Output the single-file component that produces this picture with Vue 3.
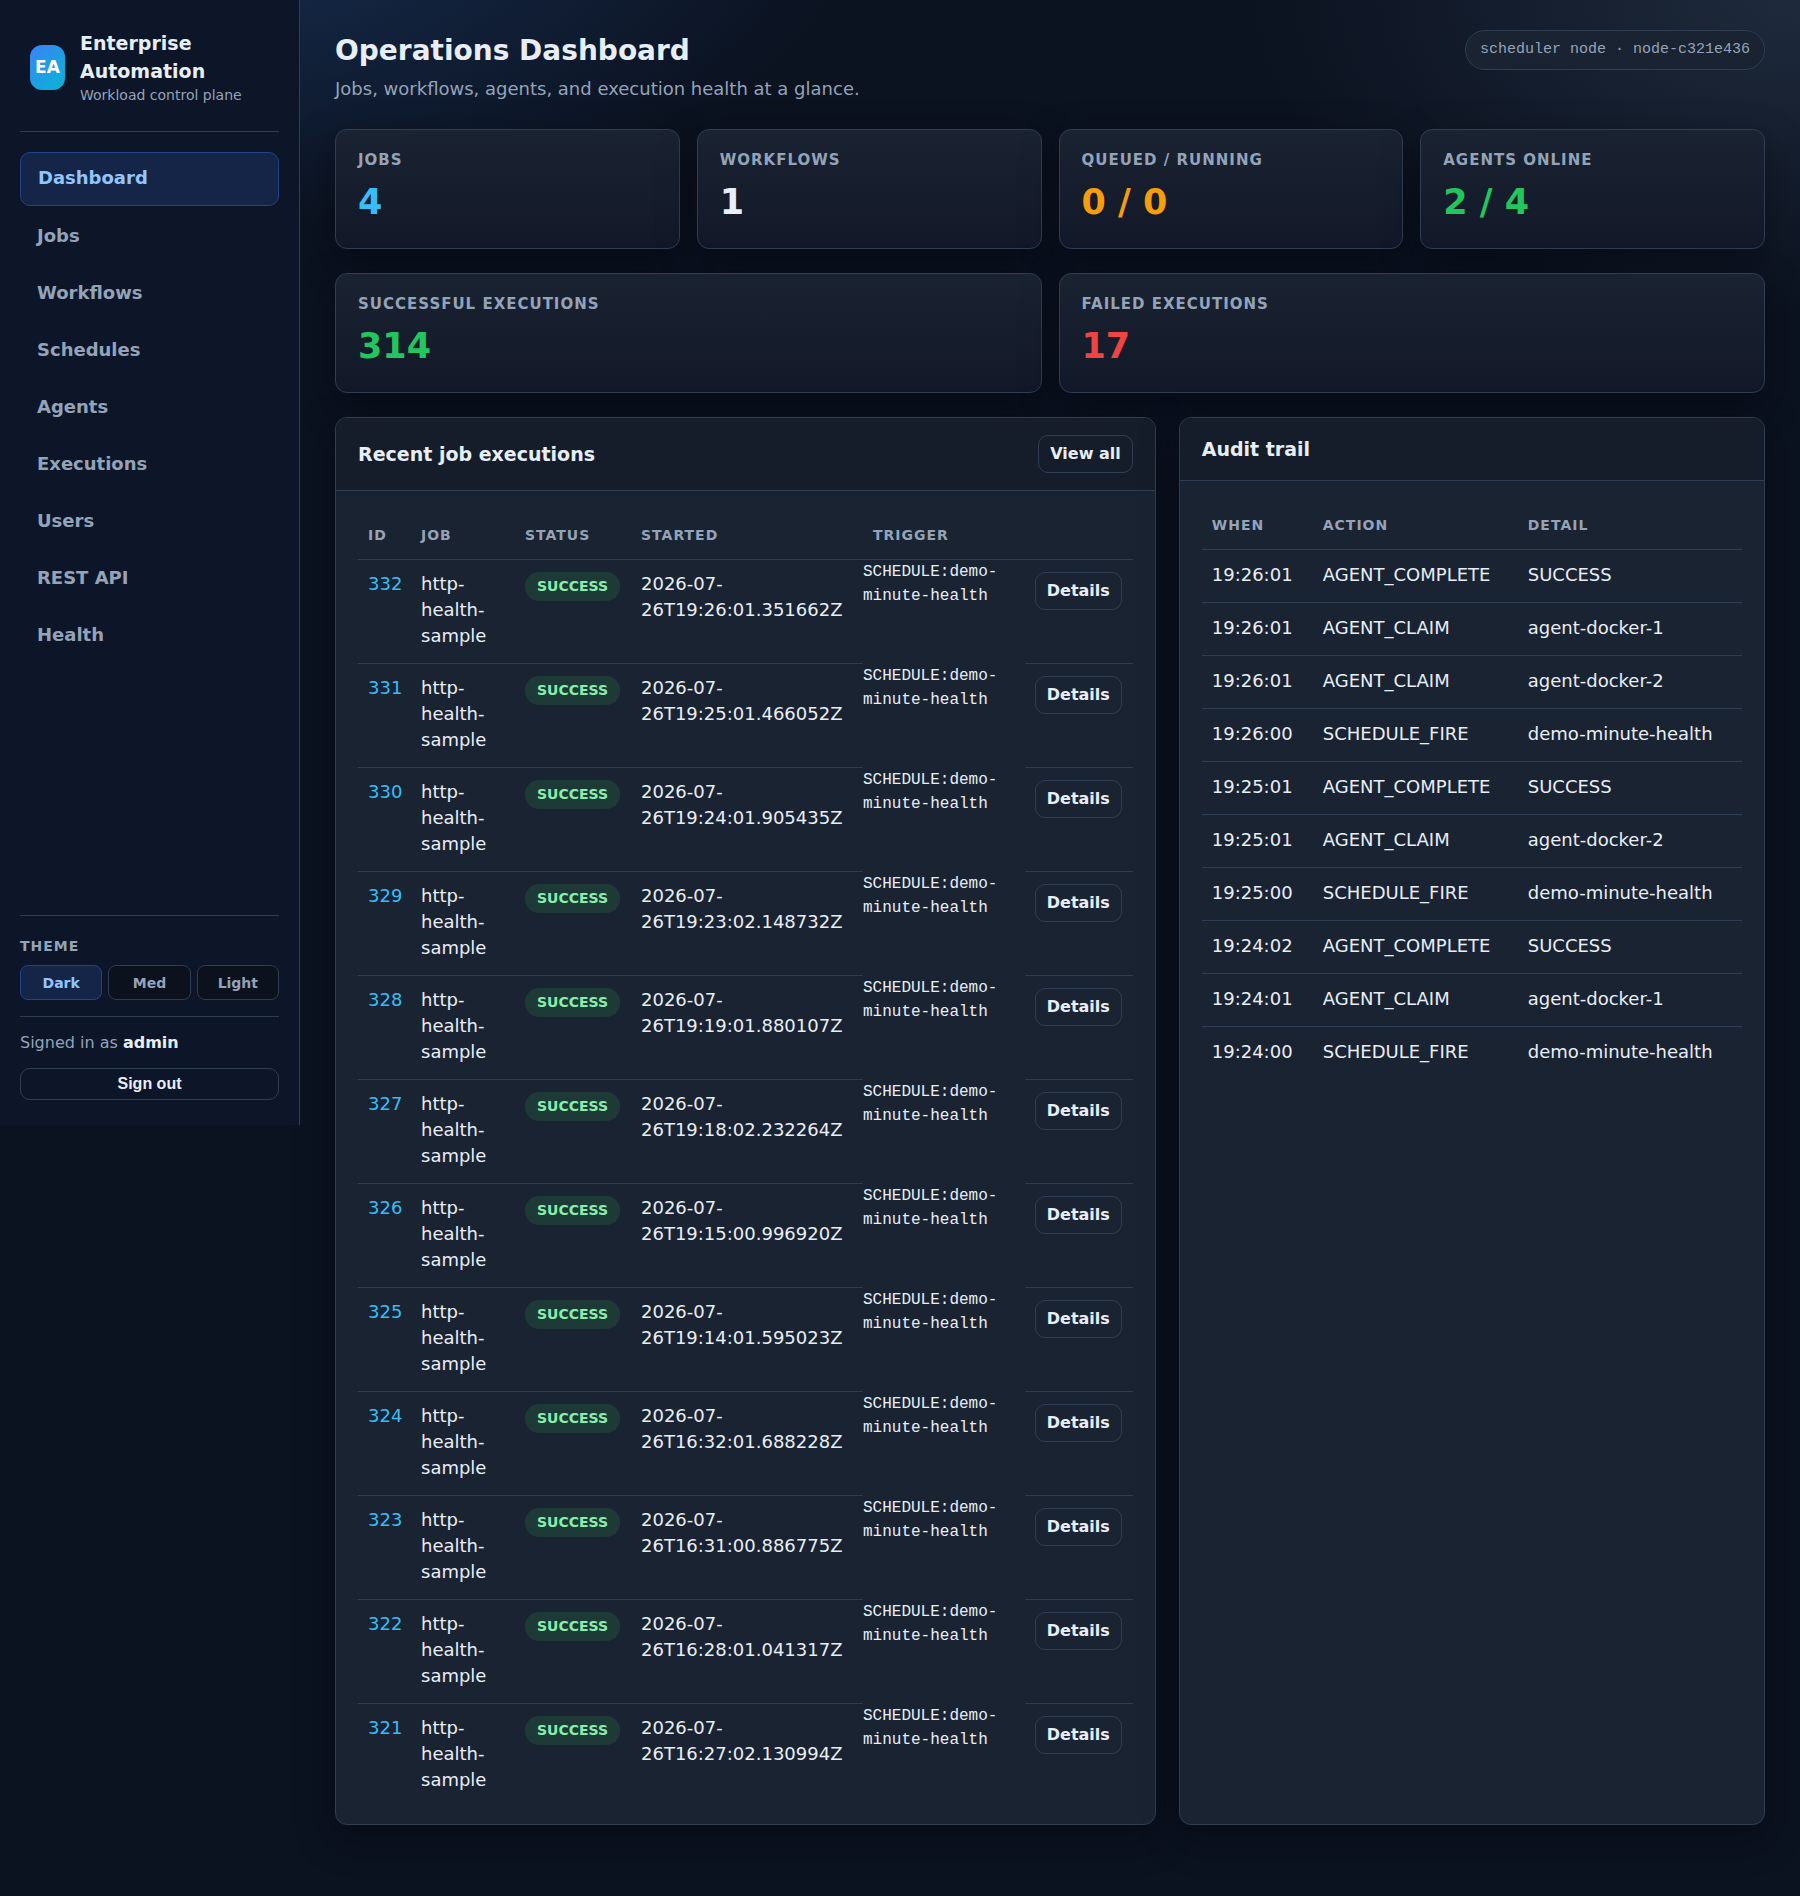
<script setup>
import { ref } from 'vue'

const navItems = ['Dashboard', 'Jobs', 'Workflows', 'Schedules', 'Agents', 'Executions', 'Users', 'REST API', 'Health']
const activeNav = ref('Dashboard')

const themes = ['Dark', 'Med', 'Light']
const theme = ref('Dark')

const topStats = [
  { label: 'Jobs', value: '4', tone: 'info' },
  { label: 'Workflows', value: '1', tone: 'plain' },
  { label: 'Queued / Running', value: '0 / 0', tone: 'warn' },
  { label: 'Agents online', value: '2 / 4', tone: 'good' },
]
const totals = [
  { label: 'Successful executions', value: '314', tone: 'good' },
  { label: 'Failed executions', value: '17', tone: 'bad' },
]

const executions = [
  [332, '2026-07-26T19:26:01.351662Z'],
  [331, '2026-07-26T19:25:01.466052Z'],
  [330, '2026-07-26T19:24:01.905435Z'],
  [329, '2026-07-26T19:23:02.148732Z'],
  [328, '2026-07-26T19:19:01.880107Z'],
  [327, '2026-07-26T19:18:02.232264Z'],
  [326, '2026-07-26T19:15:00.996920Z'],
  [325, '2026-07-26T19:14:01.595023Z'],
  [324, '2026-07-26T16:32:01.688228Z'],
  [323, '2026-07-26T16:31:00.886775Z'],
  [322, '2026-07-26T16:28:01.041317Z'],
  [321, '2026-07-26T16:27:02.130994Z'],
].map(([id, started]) => ({
  id,
  started,
  job: 'http-health-sample',
  status: 'SUCCESS',
  trigger: 'SCHEDULE:demo-minute-health',
}))

const audit = [
  ['19:26:01', 'AGENT_COMPLETE', 'SUCCESS'],
  ['19:26:01', 'AGENT_CLAIM', 'agent-docker-1'],
  ['19:26:01', 'AGENT_CLAIM', 'agent-docker-2'],
  ['19:26:00', 'SCHEDULE_FIRE', 'demo-minute-health'],
  ['19:25:01', 'AGENT_COMPLETE', 'SUCCESS'],
  ['19:25:01', 'AGENT_CLAIM', 'agent-docker-2'],
  ['19:25:00', 'SCHEDULE_FIRE', 'demo-minute-health'],
  ['19:24:02', 'AGENT_COMPLETE', 'SUCCESS'],
  ['19:24:01', 'AGENT_CLAIM', 'agent-docker-1'],
  ['19:24:00', 'SCHEDULE_FIRE', 'demo-minute-health'],
]
</script>

<template>
  <div class="app">
    <aside class="sidebar">
      <div class="brand">
        <div class="logo">EA</div>
        <div class="brand-text">
          <strong class="brand-name">Enterprise Automation</strong>
          <span class="brand-sub">Workload control plane</span>
        </div>
      </div>

      <nav class="nav">
        <a
          v-for="item in navItems"
          :key="item"
          href="#"
          class="nav-link"
          :class="{ active: item === activeNav }"
          @click.prevent="activeNav = item"
        >{{ item }}</a>
      </nav>

      <section class="theme">
        <h2 class="theme-title">Theme</h2>
        <div class="theme-options">
          <button
            v-for="t in themes"
            :key="t"
            type="button"
            class="theme-btn"
            :class="{ active: t === theme }"
            @click="theme = t"
          >{{ t }}</button>
        </div>
      </section>

      <section class="account">
        <p class="signed-in">Signed in as <strong>admin</strong></p>
        <button type="button" class="sign-out">Sign out</button>
      </section>
    </aside>

    <main class="main">
      <header class="page-head">
        <div>
          <h1 class="page-title">Operations Dashboard</h1>
          <p class="page-sub">Jobs, workflows, agents, and execution health at a glance.</p>
        </div>
        <span class="node">scheduler node · node-c321e436</span>
      </header>

      <div class="stats stats-four">
        <article v-for="s in topStats" :key="s.label" class="stat">
          <h2 class="stat-label">{{ s.label }}</h2>
          <p class="stat-value" :class="s.tone">{{ s.value }}</p>
        </article>
      </div>
      <div class="stats stats-two">
        <article v-for="s in totals" :key="s.label" class="stat">
          <h2 class="stat-label">{{ s.label }}</h2>
          <p class="stat-value" :class="s.tone">{{ s.value }}</p>
        </article>
      </div>

      <div class="panels">
        <section class="panel">
          <div class="panel-head">
            <h2 class="panel-title">Recent job executions</h2>
            <a href="#" class="btn">View all</a>
          </div>
          <div class="panel-body">
            <table class="table executions">
              <colgroup>
                <col class="c-id" /><col class="c-job" /><col class="c-status" />
                <col class="c-started" /><col /><col class="c-actions" />
              </colgroup>
              <thead>
                <tr>
                  <th>ID</th>
                  <th>Job</th>
                  <th>Status</th>
                  <th>Started</th>
                  <th>Trigger</th>
                  <th></th>
                </tr>
              </thead>
              <tbody>
                <tr v-for="e in executions" :key="e.id">
                  <td><a href="#" class="id-link">{{ e.id }}</a></td>
                  <td>{{ e.job }}</td>
                  <td><span class="badge">{{ e.status }}</span></td>
                  <td>{{ e.started }}</td>
                  <td class="trigger">{{ e.trigger }}</td>
                  <td><a href="#" class="btn">Details</a></td>
                </tr>
              </tbody>
            </table>
          </div>
        </section>

        <section class="panel">
          <div class="panel-head">
            <h2 class="panel-title">Audit trail</h2>
          </div>
          <div class="panel-body">
            <table class="table audit">
              <colgroup><col class="c-when" /><col class="c-action" /><col /></colgroup>
              <thead>
                <tr>
                  <th>When</th>
                  <th>Action</th>
                  <th>Detail</th>
                </tr>
              </thead>
              <tbody>
                <tr v-for="(row, i) in audit" :key="i">
                  <td v-for="cell in row" :key="cell">{{ cell }}</td>
                </tr>
              </tbody>
            </table>
          </div>
        </section>
      </div>
    </main>
  </div>
</template>

<style>
body {
  margin: 0;
  background:
    radial-gradient(1250px 600px at 10% -5%, rgba(59, 130, 226, 0.26), transparent 55%),
    radial-gradient(1100px 625px at 100% 0%, rgba(108, 138, 172, 0.2), transparent 50%),
    #0b1220;
  background-repeat: no-repeat;
}
</style>

<style scoped>
.app {
  --line: #2f3e52;
  --text: #e8eef7;
  --muted: #94a3b8;
  --mono: "Liberation Mono", monospace;
  display: flex;
  align-items: flex-start;
  color: var(--text);
  font-family: "DejaVu Sans", sans-serif;
  font-size: 18px;
  line-height: 26px;
}

h1,
h2,
p {
  margin: 0;
}

a {
  text-decoration: none;
}

/* Sidebar */
.sidebar {
  position: sticky;
  top: 0;
  box-sizing: border-box;
  flex: 0 0 300px;
  padding: 20px 20px 25px;
  border-right: 1px solid var(--line);
  background: #0d1628;
}

.brand {
  display: flex;
  align-items: center;
  gap: 15px;
  padding: 9px 10px 26px;
  border-bottom: 1px solid var(--line);
}

.logo {
  display: grid;
  place-items: center;
  flex: 0 0 35px;
  height: 45px;
  border-radius: 12px;
  background: linear-gradient(135deg, #3b82f6, #06b6d4);
  color: #fff;
  font-size: 17px;
  font-weight: 700;
}

.brand-text {
  display: flex;
  flex-direction: column;
}

.brand-name {
  font-size: 19px;
  line-height: 28px;
}

.brand-sub {
  color: var(--muted);
  font-size: 14px;
  line-height: 20px;
}

.nav {
  display: flex;
  flex-direction: column;
  gap: 5px;
  padding: 20px 0 253px;
}

.nav-link {
  padding: 12px 17px 14px;
  border-radius: 10px;
  color: var(--muted);
  font-weight: 700;
}

.nav-link.active {
  border: 1px solid #22438a;
  background: #152547;
  color: #93c5fd;
}

.theme {
  padding: 20px 0 16px;
  border-top: 1px solid var(--line);
}

.theme-title {
  margin-bottom: 8px;
  color: var(--muted);
  font-size: 14px;
  line-height: 21px;
  letter-spacing: 1px;
  text-transform: uppercase;
}

.theme-options {
  display: grid;
  grid-template-columns: repeat(3, 1fr);
  gap: 6px;
}

.theme-btn {
  height: 35px;
  padding: 0;
  border: 1px solid var(--line);
  border-radius: 8px;
  background: #0b111d;
  color: var(--muted);
  font: 700 14px "DejaVu Sans", sans-serif;
}

.theme-btn.active {
  border-color: #22438a;
  background: #152547;
  color: #93c5fd;
}

.account {
  padding-top: 13px;
  border-top: 1px solid var(--line);
}

.signed-in {
  margin-bottom: 12px;
  color: var(--muted);
  font-size: 16px;
}

.signed-in strong {
  color: var(--text);
}

.sign-out {
  width: 100%;
  height: 32px;
  padding: 0;
  border: 1px solid var(--line);
  border-radius: 10px;
  background: transparent;
  color: var(--text);
  font: 700 16px "Liberation Sans", sans-serif;
}

/* Main column */
.main {
  display: flex;
  flex-direction: column;
  flex: 1;
  gap: 24px;
  min-width: 0;
  padding: 30px 35px 70px;
}

.page-head {
  display: flex;
  align-items: flex-start;
  justify-content: space-between;
  padding-bottom: 3px;
}

.page-title {
  font-size: 28px;
  line-height: 42px;
}

.page-sub {
  margin-top: 4px;
  color: var(--muted);
}

.node {
  box-sizing: border-box;
  height: 40px;
  padding: 6px 14px;
  border: 1px solid var(--line);
  border-radius: 20px;
  background: #1a2332;
  color: var(--muted);
  font-family: var(--mono);
  font-size: 15px;
}

.stats {
  display: grid;
  gap: 17px;
}

.stats-four {
  grid-template-columns: repeat(4, 1fr);
}

.stats-two {
  grid-template-columns: repeat(2, 1fr);
}

.stat,
.panel {
  border: 1px solid var(--line);
  border-radius: 12px;
  box-shadow: 0 12px 38px rgba(0, 0, 0, 0.35);
}

.stat {
  padding: 19px 22px 25px;
  background: linear-gradient(180deg, #1a2332, #121828);
}

.stat-label {
  margin-bottom: 10px;
  color: var(--muted);
  font-size: 15px;
  line-height: 22px;
  letter-spacing: 1px;
  text-transform: uppercase;
}

.stat-value {
  font-size: 35px;
  font-weight: 700;
  line-height: 42px;
}

.info { color: #38bdf8; }
.warn { color: #f59e0b; }
.good { color: #22c55e; }
.bad { color: #ef4444; }

/* Panels */
.panels {
  display: grid;
  grid-template-columns: 1.4fr 1fr;
  gap: 23px;
}

.panel {
  min-width: 0;
  overflow: hidden;
  background: #1a2332;
}

.panel-head {
  display: flex;
  align-items: center;
  justify-content: space-between;
  padding: 17px 22px;
  border-bottom: 1px solid var(--line);
  background: #161d2a;
}

.panel-title {
  font-size: 19px;
  line-height: 28px;
}

.panel-body {
  padding: 20px 22px 17px;
}

.btn {
  display: inline-block;
  padding: 5px 11px;
  border: 1px solid var(--line);
  border-radius: 10px;
  color: var(--text);
  font-size: 16px;
  font-weight: 700;
}

.table {
  width: 100%;
  border-collapse: separate;
  border-spacing: 0;
  table-layout: fixed;
}

.table th {
  padding: 13px 10px;
  border-bottom: 1px solid var(--line);
  color: var(--muted);
  font-size: 14px;
  line-height: 22px;
  letter-spacing: 1px;
  text-align: left;
  text-transform: uppercase;
}

.table td {
  padding: 11px 10px 14px;
  border-bottom: 1px solid var(--line);
  vertical-align: top;
}

.table.audit td {
  padding-top: 12px;
}

.table tr:last-child td,
.table td.trigger {
  border-bottom: 0;
}

.c-id { width: 53px; }
.c-job { width: 104px; }
.c-status { width: 116px; }
.c-started { width: 232px; }
.c-actions { width: 108px; }
.c-when { width: 111px; }
.c-action { width: 205px; }

.id-link {
  color: #38bdf8;
}

.badge,
.executions .btn {
  margin-top: 1px;
}

.badge {
  display: inline-block;
  padding: 0 12px;
  border-radius: 14px;
  background: #1d3a37;
  color: #86efac;
  font-size: 14px;
  font-weight: 700;
  line-height: 29px;
}

.table td.trigger {
  padding: 0;
  font-family: var(--mono);
  font-size: 16px;
  line-height: 24px;
}
</style>
